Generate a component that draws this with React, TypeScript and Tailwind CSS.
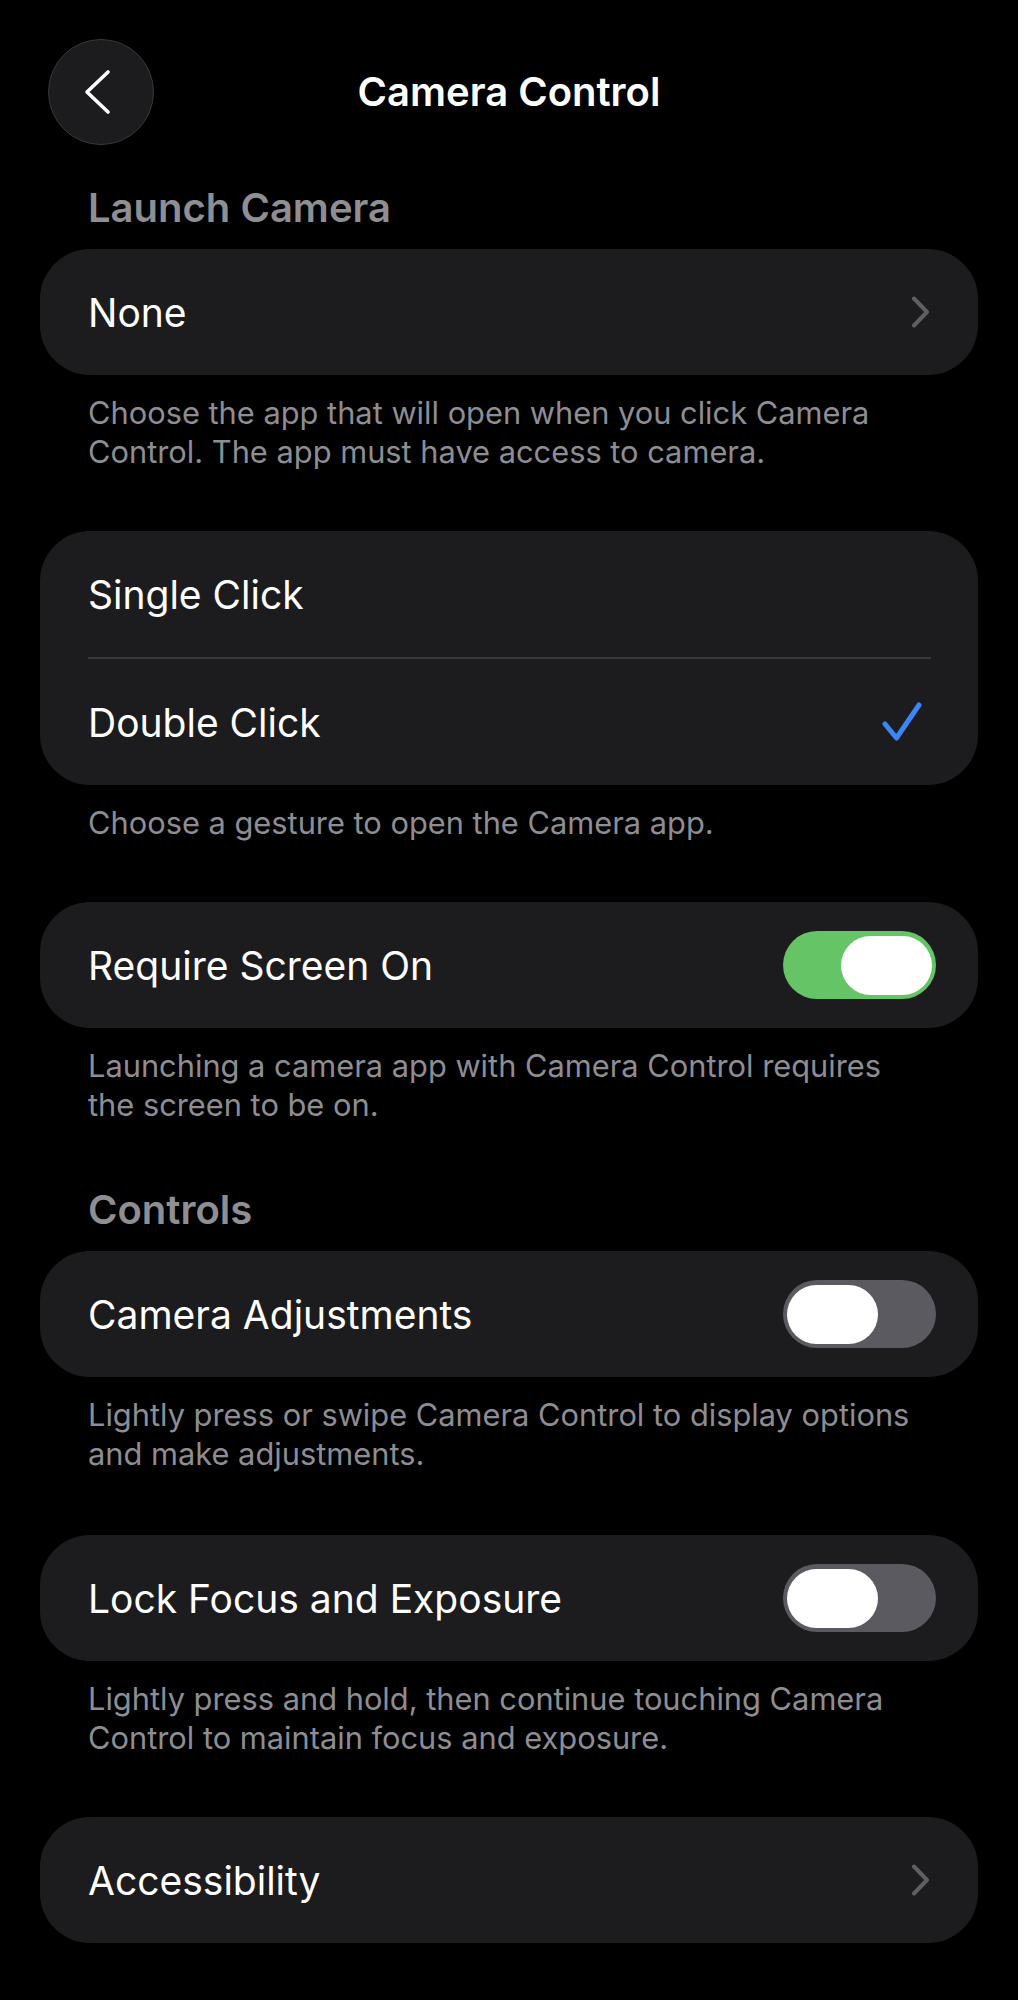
import React from "react";

function Chevron() {
  return (
    <svg width="20" height="32" viewBox="0 0 20 32" fill="none">
      <path d="M3 2.5 L16 16 L3 29.5" stroke="#5e5e63" strokeWidth="4" strokeLinecap="round" strokeLinejoin="round" />
    </svg>
  );
}

function Check() {
  return (
    <svg width="42" height="40" viewBox="0 0 42 40" fill="none">
      <path d="M4 22 L15.5 36 L38 3" stroke="#3b86f4" strokeWidth="5" strokeLinecap="round" strokeLinejoin="round" />
    </svg>
  );
}

function Toggle({ on }: { on: boolean }) {
  return (
    <div
      className={
        on
          ? "flex h-[68px] w-[153px] items-center justify-end rounded-full bg-[#65c466] px-[4px]"
          : "flex h-[68px] w-[153px] items-center justify-start rounded-full bg-[#5b5a60] px-[4px]"
      }
    >
      <div className="h-[59px] w-[91px] rounded-full bg-white" />
    </div>
  );
}

function Row({ label, right, rightPad }: { label: string; right?: React.ReactNode; rightPad?: string }) {
  return (
    <div className={"flex h-[126px] items-center justify-between pl-[48px] " + (rightPad ?? "pr-[42px]")}>
      <span className="text-[39px] leading-none text-white">{label}</span>
      {right}
    </div>
  );
}

function Footer({ children }: { children: React.ReactNode }) {
  return (
    <p className="mt-[18px] pl-[88px] pr-[93px] text-[30.8px] leading-[39px] text-[#8d8d93]">{children}</p>
  );
}

function Header({ children }: { children: React.ReactNode }) {
  return (
    <h2 className="px-[88px] text-[40px] font-semibold leading-[48px] text-[#8e8e93]">{children}</h2>
  );
}

export default function App() {
  return (
    <div
      className="min-h-[2000px] w-[1018px] bg-black pb-[40px] pt-[39px]"
      style={{ fontFamily: "Inter, 'Noto Sans', sans-serif" }}
    >
      {/* nav */}
      <div className="grid h-[106px] grid-cols-[1fr_auto_1fr] items-center">
        <div className="pl-[48px]">
          <div className="flex h-[106px] w-[106px] items-center justify-center rounded-full border-[1.5px] border-[#38383a] bg-[#1c1c1e]">
            <svg width="30" height="46" viewBox="0 0 30 46" fill="none" className="mr-[6px]">
              <path d="M25 3 L4 23 L25 43" stroke="white" strokeWidth="3.6" strokeLinecap="round" strokeLinejoin="round" />
            </svg>
          </div>
        </div>
        <h1 className="text-[40px] font-semibold leading-none text-white">Camera Control</h1>
        <div />
      </div>

      <div className="mt-[39px]">
        <Header>Launch Camera</Header>
      </div>
      <div className="mx-[40px] mt-[17px] rounded-[50px] bg-[#1c1c1e]">
        <Row label="None" right={<Chevron />} rightPad="pr-[47px]" />
      </div>
      <Footer>
        Choose the app that will open when you click Camera Control. The app must have access to camera.
      </Footer>

      <div className="mx-[40px] mt-[60px] rounded-[50px] bg-[#1c1c1e]">
        <Row label="Single Click" />
        <div className="ml-[48px] mr-[47px] h-[2px] bg-[#38383a]" />
        <Row label="Double Click" right={<Check />} rightPad="pr-[55px]" />
      </div>
      <Footer>Choose a gesture to open the Camera app.</Footer>

      <div className="mx-[40px] mt-[60px] rounded-[50px] bg-[#1c1c1e]">
        <Row label="Require Screen On" right={<Toggle on={true} />} />
      </div>
      <Footer>Launching a camera app with Camera Control requires the screen to be on.</Footer>

      <div className="mt-[62px]">
        <Header>Controls</Header>
      </div>
      <div className="mx-[40px] mt-[17px] rounded-[50px] bg-[#1c1c1e]">
        <Row label="Camera Adjustments" right={<Toggle on={false} />} />
      </div>
      <Footer>Lightly press or swipe Camera Control to display options and make adjustments.</Footer>

      <div className="mx-[40px] mt-[62px] rounded-[50px] bg-[#1c1c1e]">
        <Row label="Lock Focus and Exposure" right={<Toggle on={false} />} />
      </div>
      <Footer>Lightly press and hold, then continue touching Camera Control to maintain focus and exposure.</Footer>

      <div className="mx-[40px] mt-[60px] rounded-[50px] bg-[#1c1c1e]">
        <Row label="Accessibility" right={<Chevron />} rightPad="pr-[47px]" />
      </div>
    </div>
  );
}
